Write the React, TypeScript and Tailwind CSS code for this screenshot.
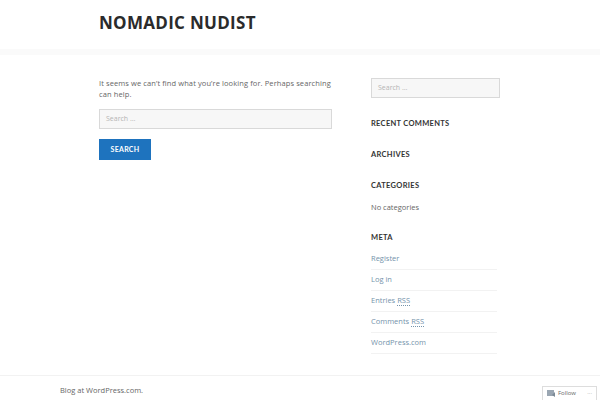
import React from 'react';

const metaLinks = ['Register', 'Log in', 'Entries RSS', 'Comments RSS', 'WordPress.com'];

const SearchBox: React.FC<{ className?: string }> = ({ className }) => (
  <div
    className={`h-[20px] border border-[#d9d9d9] bg-[#f7f7f7] flex items-center px-[6px] text-[7px] text-[#b5b5b5] ${className ?? ''}`}
  >
    Search …
  </div>
);

const WidgetTitle: React.FC<{ children: React.ReactNode }> = ({ children }) => (
  <h3 className="text-[7.5px] font-bold tracking-[0.3px] text-[#333] leading-[10px] font-['Lato',sans-serif]">
    {children}
  </h3>
);

const App: React.FC = () => {
  return (
    <div className="w-[600px] h-[400px] bg-white overflow-hidden relative font-['Open_Sans',sans-serif] text-[#666]">
      {/* Header */}
      <header className="h-[49px] flex items-center pl-[99px] pb-[4px]">
        <h1 className="text-[17px] font-bold tracking-[0.3px] text-[#2b2b2b] font-['Open_Sans',sans-serif] leading-none">
          NOMADIC NUDIST
        </h1>
      </header>
      <div className="h-[6px] bg-[#fafafa]" />

      {/* Main */}
      <div className="flex pl-[99px] pt-[23px] gap-[39px]">
        <main className="w-[233px]">
          <p className="text-[7.5px] tracking-[0.1px] leading-[11px] text-[#666]">
            It seems we can’t find what you’re looking for. Perhaps searching can help.
          </p>
          <SearchBox className="mt-[9px]" />
          <button className="mt-[10px] h-[21px] w-[52px] bg-[#1e73be] text-white text-[7px] font-bold tracking-[0.3px] flex items-center justify-center font-['Lato',sans-serif]">
            SEARCH
          </button>
        </main>

        <aside className="w-[129px]">
          <SearchBox />
          <div className="mt-[21px]">
            <WidgetTitle>RECENT COMMENTS</WidgetTitle>
          </div>
          <div className="mt-[21px]">
            <WidgetTitle>ARCHIVES</WidgetTitle>
          </div>
          <div className="mt-[21px]">
            <WidgetTitle>CATEGORIES</WidgetTitle>
            <p className="mt-[11px] text-[7.5px] leading-[10px] text-[#666]">No categories</p>
          </div>
          <div className="mt-[21px]">
            <WidgetTitle>META</WidgetTitle>
            <ul className="mt-[6px] w-[126px]">
              {metaLinks.map((l) => (
                <li
                  key={l}
                  className="h-[21px] flex items-center border-b border-[#f2f2f2] text-[7.5px] text-[#7593ab]"
                >
                  {l.endsWith('RSS') ? (
                    <span>
                      {l.replace('RSS', '')}
                      <span className="border-b border-dotted border-[#7593ab]">RSS</span>
                    </span>
                  ) : (
                    l
                  )}
                </li>
              ))}
            </ul>
          </div>
        </aside>
      </div>

      {/* Footer */}
      <footer className="absolute left-0 right-0 top-[375px] border-t border-[#f2f2f2] h-[25px]">
        <p className="pl-[60px] pt-[9px] text-[7.5px] text-[#666] leading-[10px]">Blog at WordPress.com.</p>
        <div className="absolute right-[3px] top-[10px] h-[15px] w-[55px] border border-[#ddd] bg-white flex items-center gap-[3px] px-[4px] text-[6px] text-[#666]">
          <svg width="8" height="7" viewBox="0 0 8 7">
            <rect x="0" y="0" width="7" height="6" fill="#9aa6b2" />
            <path d="M5 5 L8 2 L8 7 Z" fill="#7d8a96" />
          </svg>
          <span>Follow</span>
          <span className="ml-auto text-[#999]">···</span>
        </div>
      </footer>
    </div>
  );
};

export default App;
